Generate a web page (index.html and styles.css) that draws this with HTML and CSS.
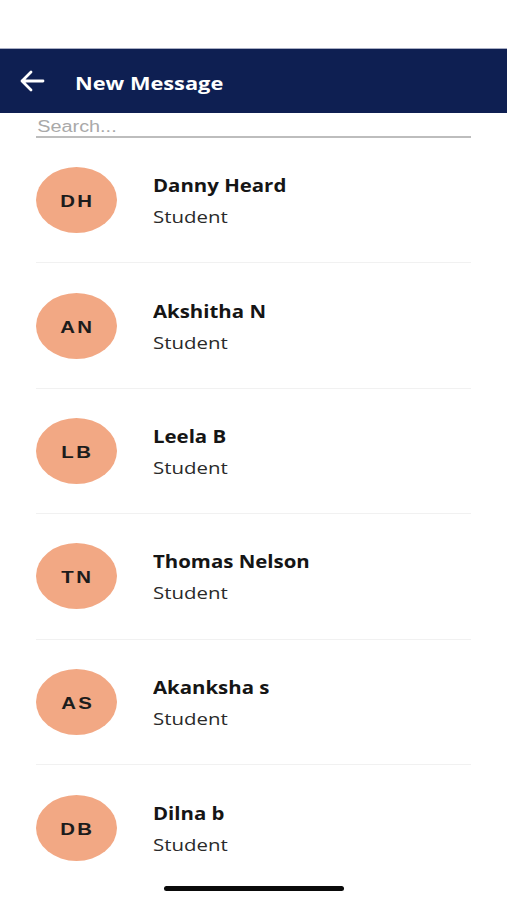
FILE: index.html
```html
<!DOCTYPE html>
<html>
<head>
<meta charset="utf-8">
<link rel="stylesheet" href="styles.css">
</head>
<body>
<div class="status"></div>
<header class="bar">
  <svg class="back" width="26" height="22" viewBox="0 0 26 22"><path d="M24 11H3M12 2L3 11l9 9" fill="none" stroke="#fff" stroke-width="2.8" stroke-linecap="round" stroke-linejoin="round"/></svg>
  <h1 class="title">New Message</h1>
</header>
<div class="search"><span class="placeholder">Search...</span></div>
<ul class="list">
  <li class="item"><div class="avatar"><span>DH</span></div><div class="info"><div class="name">Danny Heard</div><div class="role">Student</div></div></li>
  <li class="item"><div class="avatar"><span>AN</span></div><div class="info"><div class="name">Akshitha N</div><div class="role">Student</div></div></li>
  <li class="item"><div class="avatar"><span>LB</span></div><div class="info"><div class="name">Leela B</div><div class="role">Student</div></div></li>
  <li class="item"><div class="avatar"><span>TN</span></div><div class="info"><div class="name">Thomas Nelson</div><div class="role">Student</div></div></li>
  <li class="item"><div class="avatar"><span>AS</span></div><div class="info"><div class="name">Akanksha s</div><div class="role">Student</div></div></li>
  <li class="item last"><div class="avatar"><span>DB</span></div><div class="info"><div class="name">Dilna b</div><div class="role">Student</div></div></li>
</ul>
<div class="home"></div>
</body>
</html>
```
FILE: styles.css
```css
* { box-sizing: border-box; }
html, body { margin: 0; padding: 0; }
body {
  width: 507px;
  height: 900px;
  overflow: hidden;
  background: #fff;
  font-family: "Open Sans", "Noto Sans", sans-serif;
  color: #1a1a1a;
  position: relative;
}
.status { height: 49px; border-bottom: 1px solid #a9aec4; }
.bar {
  height: 64px;
  background: #0e1f52;
  display: flex;
  align-items: center;
  padding-left: 19px;
}
.back { display: block; margin-top: 0; }
.title {
  margin: 4px 0 0 30px;
  color: #fff;
  font-size: 18px;
  font-weight: 700;
  display: inline-block;
  transform: scaleX(1.21);
  transform-origin: left center;
}
.search {
  margin: 0 36px;
  height: 25px;
  border-bottom: 2px solid #bdbdbd;
  display: flex;
  align-items: center;
}
.placeholder {
  font-family: "Liberation Sans", Arial, sans-serif;
  color: #a9a9a9;
  font-size: 16px;
  padding-left: 1px;
  padding-top: 4px;
  display: inline-block;
  transform: scaleX(1.24);
  transform-origin: left center;
}
.list { list-style: none; margin: 0 36px; padding: 0; }
.item {
  height: 125.4px;
  display: flex;
  align-items: center;
  border-bottom: 1px solid #f1f1f1;
}
.item.last { border-bottom: none; }
.avatar {
  width: 81px;
  height: 66px;
  border-radius: 50%;
  background: #f2a884;
  display: flex;
  align-items: center;
  justify-content: center;
  flex: none;
}
.avatar span {
  display: inline-block;
  font-family: "Liberation Sans", Arial, sans-serif;
  font-weight: 700;
  font-size: 17px;
  letter-spacing: 2px;
  margin-right: -2px;
  margin-top: 4px;
  color: #1c1c1c;
  transform: scaleX(1.2);
}
.info { margin-left: 36px; margin-top: 3px; }
.name, .role {
  transform: scaleX(1.2);
  transform-origin: left center;
}
.name { font-size: 17px; font-weight: 700; line-height: 24px; color: #151515; }
.role { font-size: 17px; line-height: 24px; margin-top: 7px; color: #2a2a2a; }
.home {
  position: absolute;
  left: 164px;
  top: 886px;
  width: 180px;
  height: 5px;
  border-radius: 3px;
  background: #0a0a0a;
}
```
